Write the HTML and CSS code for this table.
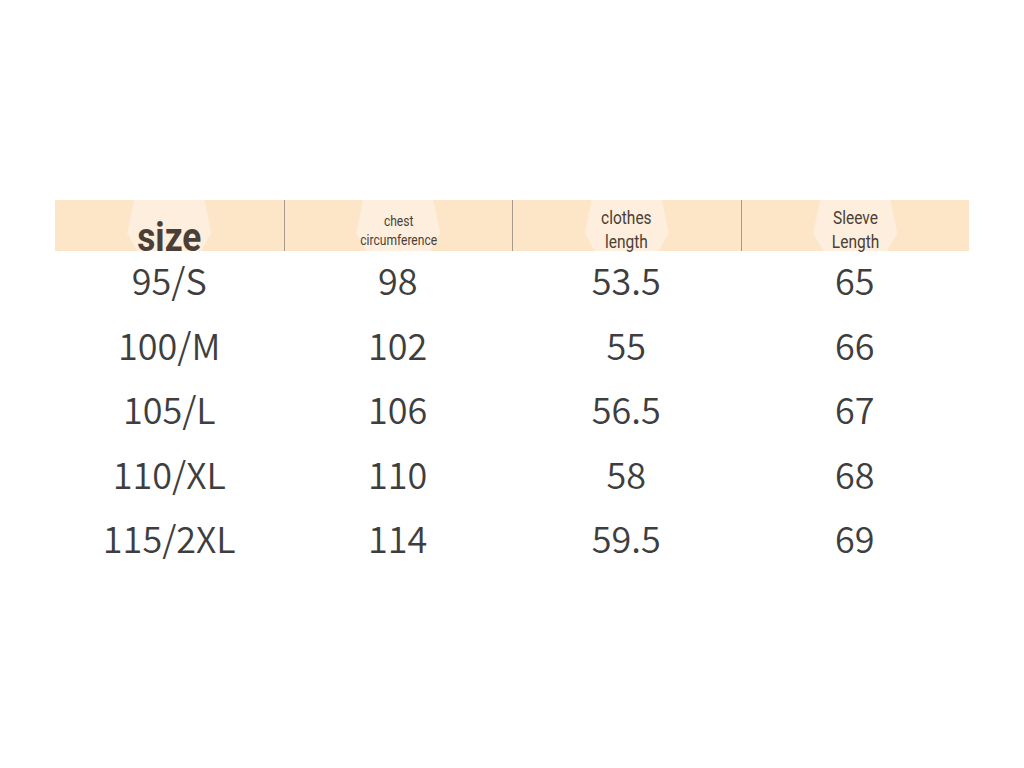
FILE: index.html
```html
<!DOCTYPE html>
<html lang="en">
<head>
<meta charset="utf-8">
<title>Size chart</title>
<link rel="stylesheet" href="styles.css">
</head>
<body>
<main class="chart">
  <div class="head">
    <div class="hcell first"><span class="glow"></span><span class="t size">size</span></div>
    <div class="hcell"><span class="glow"></span><span class="t small">chest<br>circumference</span></div>
    <div class="hcell"><span class="glow"></span><span class="t mid">clothes<br>length</span></div>
    <div class="hcell"><span class="glow"></span><span class="t mid">Sleeve<br>Length</span></div>
  </div>
  <div class="body">
    <div class="row"><span>95/S</span><span>98</span><span>53.5</span><span>65</span></div>
    <div class="row"><span>100/M</span><span>102</span><span>55</span><span>66</span></div>
    <div class="row"><span>105/L</span><span>106</span><span>56.5</span><span>67</span></div>
    <div class="row"><span>110/XL</span><span>110</span><span>58</span><span>68</span></div>
    <div class="row"><span>115/2XL</span><span>114</span><span>59.5</span><span>69</span></div>
  </div>
</main>
</body>
</html>
```
FILE: styles.css
```css
html, body {
  margin: 0;
  padding: 0;
  background: #ffffff;
}
body {
  width: 1024px;
  height: 768px;
  overflow: hidden;
}
.chart {
  margin: 200px 0 0 55px;
  width: 914px;
}
.head {
  display: grid;
  grid-template-columns: repeat(4, 1fr);
  grid-template-rows: 51px;
  height: 51px;
  background: #fde5c8;
}
.hcell {
  position: relative;
  display: flex;
  align-items: center;
  justify-content: center;
  border-left: 1px solid #a79a8d;
  color: #4a3f36;
  font-family: Roboto, "Liberation Sans", sans-serif;
}
.hcell.first {
  border-left: none;
  align-items: flex-end;
}
.glow {
  position: absolute;
  top: 0;
  bottom: 0;
  left: 50%;
  width: 84px;
  margin-left: -42px;
  background: #fdeedd;
  clip-path: polygon(8% 0, 92% 0, 100% 65%, 88% 100%, 12% 100%, 0 65%);
}
.t {
  position: relative;
  display: inline-block;
  text-align: center;
  transform: scaleX(0.86);
}
.size {
  font-size: 41px;
  font-weight: 700;
  line-height: 30px;
  transform: translateY(1px) scaleX(0.86);
}
.small {
  font-size: 14px;
  font-weight: 400;
  line-height: 19px;
  transform: translateY(5px) scaleX(0.86);
}
.mid {
  font-size: 18px;
  font-weight: 400;
  line-height: 24px;
  transform: translateY(4px) scaleX(0.86);
}
.body {
  margin-top: -4px;
  color: #3e3e3e;
  font-family: "Noto Sans CJK SC", "Noto Sans", sans-serif;
  font-size: 36px;
  font-weight: 350;
}
.row {
  display: grid;
  grid-template-columns: repeat(4, 1fr);
  height: 64.5px;
  align-items: center;
  text-align: center;
}
.row span {
  line-height: 1;
}
```
